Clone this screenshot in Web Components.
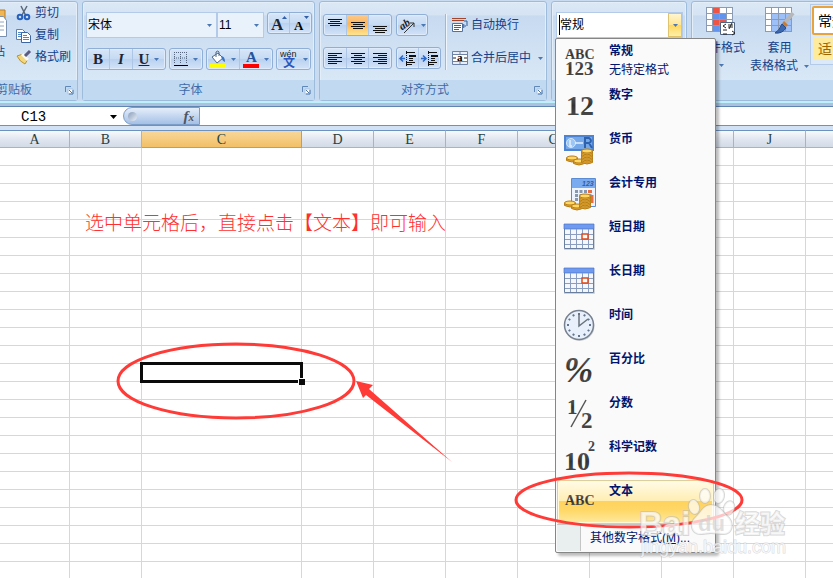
<!DOCTYPE html>
<html lang="zh-CN">
<head>
<meta charset="utf-8">
<title>数字格式</title>
<style>
html,body{margin:0;height:100%;overflow:hidden;background:#fff}
body{font:12px/18px "Liberation Sans","Noto Sans CJK SC",sans-serif;color:#15428b}
</style>
</head>
<body>
<sheet-app></sheet-app>
<script>
function define(name, css, html, setup) {
  const t = document.createElement('template');
  t.innerHTML = `<style>*{box-sizing:border-box}button,input,select{font:inherit;color:inherit;border:0;padding:0;margin:0;background:none;border-radius:0;outline:0}svg{display:block;flex:none}${css}</style>${html}`;
  customElements.define(name, class extends HTMLElement {
    constructor() {
      super();
      this.attachShadow({mode: 'open'}).append(t.content.cloneNode(true));
    }
    connectedCallback() { if (setup && !this.ready) { this.ready = true; setup(this, this.shadowRoot); } }
  });
}
const arrow = '<svg class="arrow" width="5" height="3"><path d="M0 0h5L2.500 3z" fill="#4a78b5"/></svg>';

define('ribbon-group', `
:host{display:flex;flex-direction:column;flex:none;height:100px;margin-top:1px;border:1px solid #9dbcdc;border-radius:3px;box-shadow:inset 0 0 0 1px #e4eef9;background:linear-gradient(#dce8f5 0,#d5e3f3 13px,#c7daf0 14px,#d9e8f6 80px)}
.body{flex:1;min-height:0}
footer{display:flex;align-items:center;height:20px;background:#c1d9f1;color:#3e6aaa}
.title{flex:1;text-align:center}
.launch{width:16px;height:16px;padding-left:4px}
`, `<div class="body"><slot></slot></div>
<footer><span class="title"></span><button class="launch" aria-label="更多选项"><svg width="9" height="9" fill="none"><path d="M.5 6V.5H6" stroke="#5f87b8"/><path d="M3 3h5v5H3z" fill="#fff" stroke="#a7c2e0"/><path d="M4 4l3 3M8 4v4H4" stroke="#4f78aa"/></svg></button></footer>`,
(h, r) => { r.querySelector('.title').textContent = h.getAttribute('label');
  if (h.hasAttribute('plain')) r.querySelector('.launch').remove(); });

define('button-strip', `
:host{display:inline-flex;flex:none;height:22px;border:1px solid #8fafd6;border-radius:3px;background:linear-gradient(#d8e6f7,#c5daf4 50%,#b9d1f0 51%,#d3e3f7);box-shadow:inset 0 0 0 1px #dfeafa}
`, `<slot></slot>`);

define('tool-button', `
:host{display:flex;flex:1;border-left:1px solid #adc6e6}
:host(:first-child){border-left:0}
:host([on]){background:linear-gradient(#fbc98d,#fdb559 45%,#ffe48e)}
button{display:flex;flex:1;align-items:center;justify-content:center;gap:5px;min-width:0}
.arrow{display:none}
:host([menu]) .arrow{display:block}
`, `<button><slot></slot>${arrow}</button>`, (h, r) => r.querySelector('button').setAttribute('aria-label', h.getAttribute('label')));

define('text-tool', `
:host{display:block;height:22px}
button{display:flex;align-items:center;gap:3px;height:22px;white-space:nowrap}
.arrow{display:none}
:host([menu]) .arrow{display:block;margin-left:4px}
`, `<button><slot name="icon"></slot><span><slot></slot></span>${arrow}</button>`);

define('combo-select', `
:host{display:grid;height:26px;background:#e9f1fb;border:1px solid #b3cbe8}
select{grid-area:1/1;appearance:none;width:100%;padding:0 1px;color:#000}
.arrow{grid-area:1/1;place-self:center end;margin-right:4px;pointer-events:none}
`, `<select><option></option></select>${arrow}`, (h, r) => {
  r.querySelector('option').textContent = h.getAttribute('value');
  r.querySelector('select').setAttribute('aria-label', h.getAttribute('label'));
});

define('format-item', `
:host{display:block;height:44px}
button{display:flex;width:100%;height:44px;text-align:left;color:#00156e}
.icon{flex:none;width:52px;height:44px;padding:1px 0 0 5px}
.text{line-height:19px;padding-top:2px}
b,span{display:block}
:host([selected]) button{background:linear-gradient(#fffbe6,#ffeeb4 47%,#ffd25c 48%,#ffd868 70%,#ffeaa0);border:1px solid #ddcf9b;border-radius:2px;box-shadow:inset 0 0 0 1px #fff8d9}
:host([selected]) .icon{width:51px;padding:0 0 0 4px}
:host([selected]) .text{padding-top:1px}
`, `<button role="option"><div class="icon"><slot></slot></div><div class="text"><b></b><span></span></div></button>`,
(h, r) => { r.querySelector('b').textContent = h.getAttribute('label'); r.querySelector('span').textContent = h.getAttribute('note') || ''; });

const ink = 'fill="url(#ink)"';
const defs = '<defs><linearGradient id="ink" x2="0" y2="1"><stop stop-color="#666"/><stop offset=".5" stop-color="#333"/><stop offset="1" stop-color="#555"/></linearGradient></defs>';
const serif = 'font-family="Liberation Serif" font-weight="700"';
const coin = (x, y) => `<ellipse cx="${x}" cy="${y}" rx="5.500" ry="2" fill="#ffd765" stroke="#b57b16"/>`;
const stack = (x, y, n) => Array.from({length: n}, (_, i) => `<path d="M${x - 5.5} ${y - i * 3}v2.500q5.500 3 11 0v-2.500z" fill="#e9aa32" stroke="#b57b16"/>` + coin(x, y - i * 3)).join('');
const svg = body => `<svg width="36" height="40">${defs}${body}</svg>`;
const calendar = svg(`<path d="M2.500 8.500h29v23h-29z" fill="#f4f8fe" stroke="#6a7f9e"/><path d="M2 7h30v5H2z" fill="#6f9af0" stroke="#4c72c8" stroke-width=".7"/><path d="M8.500 12v19M14.500 12v19M20.500 12v19M26.500 12v19M3 17.500h28M3 22.500h28M3 27.500h28" stroke="#8b9ec0"/><path d="M20 17h6v5h-6z" fill="#fff" stroke="#e04a18" stroke-width="1.500"/><path d="M2 32.500h30.500V12" fill="none" stroke="#cfd3da"/>`);
const ticks = Array.from({length: 12}, (_, i) => `<path d="M17 8v2" transform="rotate(${i * 30} 17 20)" stroke="#65758d" stroke-width="2"/>`).join('');

define('format-combo', `
:host{display:block;position:relative}
.field{display:flex;height:26px;border:1px solid #b3cbe8;background:#fff}
.caret{width:1px;height:20px;margin:2px 0 0 2px;background:#000}
input{flex:1;min-width:0;color:#000}
.drop{display:grid;place-items:center;width:14px;border:1px solid #e0c36f;background:linear-gradient(#fff6d0,#ffe696 49%,#ffd75c 50%,#fff0a8)}
.menu{position:absolute;z-index:2;top:26px;left:-1px;width:161px;padding:1px;border:1px solid #868686;border-radius:2px;background:#fafafa;box-shadow:3px 3px 3px #0004}
.more{display:flex;width:100%;height:27px;border-top:1px solid #c5c5c5;color:#00156e;text-align:left;line-height:27px;white-space:nowrap}
.more i{width:24px;margin-right:9px;background:#e9eeee;border-right:1px solid #c5c5c5}
`, `<div class="field"><span class="caret"></span><input value="常规" aria-label="数字格式"><button class="drop" aria-label="展开">${arrow}</button></div>
<div class="menu" role="listbox">
<format-item label="常规" note="无特定格式">${svg(`<text ${ink} ${serif} font-size="14" x="3" y="18">ABC</text><text ${ink} ${serif} font-size="19" x="3" y="34">123</text>`)}</format-item>
<format-item label="数字">${svg(`<text ${ink} ${serif} font-size="28" x="4" y="30">12</text>`)}</format-item>
<format-item label="货币">${svg(`<path d="M2 6h30v16H2z" fill="#4d83d0"/><path d="M4 8h26v12H4z" fill="#75a8e8"/><circle cx="9" cy="14" r="4.500" fill="#9cc6f5" stroke="#d5e7fb"/><path d="M8 11v6h2M13 14h8" stroke="#e3f0ff" fill="none" stroke-width="1.500"/><path d="M23 19V9h4q4 3 0 5l3 5M23 14h5" fill="none" stroke="#2e62ad" stroke-width="2"/>${stack(10, 29, 1)}${stack(17, 32, 1)}${stack(25, 31, 4)}`)}</format-item>
<format-item label="会计专用">${svg(`<path d="M9.500 5.500h24v28h-24z" fill="#edf4fe" stroke="#5b8bd3"/><path d="M10 6h23v9H10z" fill="#7aaaf0"/><text x="20" y="13" font-family="Liberation Sans" font-size="7" font-style="italic" font-weight="700" fill="#2f5eac">123</text><path d="M13 18.500h17M13 22.500h17M13 26.500h17" stroke="#8997ac" stroke-width="3" stroke-dasharray="3 1.500"/><path d="M26 18.500h4M30 22v8" stroke="#ea6c40" stroke-width="3"/>${stack(8, 30, 1)}${stack(15, 33, 1)}${stack(23, 32, 4)}`)}</format-item>
<format-item label="短日期">${calendar}</format-item>
<format-item label="长日期">${calendar}</format-item>
<format-item label="时间">${svg(`<circle cx="17.500" cy="21" r="15" fill="#cdd0d5"/><circle cx="17" cy="20" r="14.500" fill="#e8f1fb" stroke="#77818f" stroke-width="1.500"/>${ticks}<path d="M17 8v13l9-7" fill="none" stroke="#69737f" stroke-width="1.500"/>`)}</format-item>
<format-item label="百分比">${svg(`<text ${ink} ${serif} font-style="italic" font-size="35" x="2" y="33">%</text>`)}</format-item>
<format-item label="分数">${svg(`<text ${ink} ${serif} font-size="21" x="5" y="21">1</text><path d="M9 34L24 7" stroke="#555" stroke-width="1.500"/><text ${ink} ${serif} font-size="23" x="19" y="35">2</text>`)}</format-item>
<format-item label="科学记数">${svg(`<text ${ink} ${serif} font-size="26" x="2" y="33">10</text><text ${ink} ${serif} font-size="14" x="26" y="14">2</text>`)}</format-item>
<format-item label="文本" selected>${svg(`<text ${ink} ${serif} font-size="14" x="3" y="24">ABC</text>`)}</format-item>
<button class="more"><i></i><span>其他数字格式(<u>M</u>)...</span></button>
</div>`);

const lines = d => `<svg width="14" height="17" stroke="#111" stroke-width="1"><path d="${d}"/></svg>`;
const top3 = 'M0 2.500h14M2 4.500h10M0 6.500h14M2 8.500h10', mid3 = 'M0 5.500h14M2 7.500h10M0 9.500h14M2 11.500h10', bot3 = 'M0 9.500h14M2 11.500h10M0 13.500h14M2 15.500h10';
const left = 'M0 3.500h14M0 5.500h9M0 7.500h14M0 9.500h9M0 11.500h14M0 13.500h9', center = 'M0 3.500h14M3 5.500h8M0 7.500h14M3 9.500h8M0 11.500h14M3 13.500h8', right = 'M0 3.500h14M5 5.500h9M0 7.500h14M5 9.500h9M0 11.500h14M5 13.500h9';
const indent = d => `<svg width="17" height="15" fill="none" stroke="#111"><path d="M7 1.500h9M10 4.500h7M10 5.500h7M10 7.500h4M10 9.500h4M7 11.500h9M7 13.500h6"/><path d="M7.500 0v15" stroke-dasharray="1 1"/><path d="${d}" stroke="#2b67c7" stroke-width="1.500"/></svg>`;
const cells = extra => `<svg width="32" height="30"><path d="M1 1h27v25H1z" fill="#fff"/>${extra}<path d="M1.500 1v25M7.500 1v25M14.500 1v25M21.500 1v25M27.500 1v25M1 1.500h27M1 7.500h27M1 13.500h27M1 19.500h27M1 25.500h27" stroke="#8b9bb5"/>`;

define('ribbon-bar', `
:host{display:flex;gap:4px;height:107px;padding-bottom:6px;background:linear-gradient(#c8dbf0 0 101px,#bdf0fb 101px 103px,#aac2dd 103px 106px,#5f85b3 106px)}
.clip{width:112px;margin-left:-34px}
.font{width:233px}.align{width:228px}.num{width:136px}.styles{flex:1 0 240px}
.row{display:flex}
.clip .row{gap:8px;padding:0 0 0 11px}
.paste{width:30px;display:grid;justify-items:center;align-content:start;gap:6px;padding-top:5px}
.rows{padding:10px 3px 0;display:grid;gap:10px}
.gap{gap:4px}
.font .row{height:26px}
.font .row+.row{height:22px}
.font .gap{gap:3px}
.serif{font-family:"Liberation Serif";font-weight:700;color:#1d2634}
.align .cols{display:flex;padding:12px 3px 0}
.stack{display:grid;gap:11px;align-content:start;justify-items:start}
.sep{border-left:1px solid #9db9da;margin:0 6px 0 4px;height:56px;box-shadow:1px 0 #eef5fc}
.num format-combo{margin:10px 3px 0 4px}
.big{flex:none;display:grid;justify-items:center;align-content:start;width:58px;white-space:nowrap;line-height:18px;padding-top:4px}
.big>svg:first-child{margin-bottom:3px}
.big span{display:flex;align-items:center;gap:6px}
.gallery{flex:none;width:118px;margin:2px 0 0 2px;padding:1px;height:61px;display:grid;gap:2px;align-content:start;border:1px solid #b3cbe8;background:#dce9f8;font-size:14px}
.gallery button{height:29px;text-align:left;padding-left:5px;white-space:nowrap}
.gallery .n{border:2px solid #e8a33d;border-radius:2px;background:#fff;color:#000;padding-left:4px}
.gallery .m{background:#ffeb9c;color:#9c6500;height:23px;margin-left:2px;padding-left:4px}
`, `
<ribbon-group class="clip" label="剪贴板"><div class="row">
 <button class="paste"><svg width="30" height="30"><path d="M1 3h26v24H1z" fill="#f0b653" stroke="#ba7d2b"/><path d="M11.500 9.500h14l3 4v16h-17z" fill="#fff" stroke="#7890ad"/><path d="M14 15h12M14 19h12M14 23h12" stroke="#8da6c5"/></svg><span>粘贴</span></button>
 <div>
 <text-tool><svg slot="icon" width="16" height="16" fill="none"><path d="M5 1l5 10M11 1L6 10" stroke="#59687b" stroke-width="1.500"/><circle cx="4" cy="12" r="2.300" stroke="#2761bd" stroke-width="2"/><circle cx="11" cy="12" r="2.300" stroke="#2761bd" stroke-width="2"/></svg>剪切</text-tool>
 <text-tool><svg slot="icon" width="16" height="16"><path d="M.500 2.500h6l3 3v7h-9z" fill="#fff" stroke="#5f7fa9"/><path d="M2 5.500h4M2 7.500h5M2 9.500h5" stroke="#4e87cb"/><path d="M5.500 5.500h6l3 3v7h-9z" fill="#fff" stroke="#3c66a3"/><path d="M7 8.500h4M7 10.500h6M7 12.500h6" stroke="#4e87cb"/></svg>复制</text-tool>
 <text-tool><svg slot="icon" width="16" height="16"><path d="M1 7l6-2 5 5-3 5q-5-2-8-8z" fill="#f4d77b" stroke="#b79239"/><path d="M6 5l6 6" stroke="#f9f9ef" stroke-width="3"/><path d="M9 7l5-5" stroke="#5c5b82" stroke-width="3"/></svg>格式刷</text-tool>
 </div></div></ribbon-group>

<ribbon-group class="font" label="字体"><div class="rows">
 <div class="row"><combo-select value="宋体" label="字体" style="width:131px"></combo-select><combo-select value="11" label="字号" style="width:47px;margin-right:3px"></combo-select>
 <button-strip style="width:45px"><tool-button label="增大字号"><svg width="18" height="19"><text x="1" y="16" class="serif" font-size="17" fill="#1d2634">A</text><path d="M12 5h5l-2.500-3z" fill="#2e5fa8"/></svg></tool-button><tool-button label="减小字号"><svg width="18" height="19"><text x="2" y="16" class="serif" font-size="13">A</text><path d="M12 2h5l-2.500 3z" fill="#2e5fa8"/></svg></tool-button></button-strip></div>
 <div class="row gap">
 <button-strip style="width:80px"><tool-button label="加粗" class="serif" style="font-size:15px">B</tool-button><tool-button label="倾斜" class="serif" style="font-size:15px"><i>I</i></tool-button><tool-button label="下划线" menu class="serif" style="font-size:15px;flex:none;width:33px"><u>U</u></tool-button></button-strip>
 <button-strip style="width:34px"><tool-button label="边框" menu><svg width="14" height="16"><path d="M.500 1v11M6.500 1v11M12.500 1v11M0 1.500h13M0 7h13" fill="none" stroke="#55667e" stroke-dasharray="1 1"/><path d="M0 14.500h14" stroke="#000"/></svg></tool-button></button-strip>
 <button-strip style="width:67px"><tool-button label="填充颜色" menu><svg width="16" height="18"><path d="M2 7l6-4 5 5-6 5z" fill="#fff" stroke="#506986"/><path d="M6 7V2q2-2 3 0v4" fill="none" stroke="#506986"/><path d="M11 6q4 0 4 6-3-1-4-6z" fill="#3b72bd"/><path d="M0 14h16v4H0z" fill="#ff0"/></svg></tool-button><tool-button label="字体颜色" menu><svg width="16" height="18"><text x="3" y="12" class="serif" font-size="15" style="fill:#2a529a">A</text><path d="M0 14h16v4H0z" fill="red"/></svg></tool-button></button-strip>
 <button-strip style="width:35px"><tool-button label="拼音指南" menu><svg width="18" height="20"><text x="0" y="8" font-family="Liberation Sans" font-size="9" fill="#222">wén</text><text x="3" y="18" font-size="12" font-weight="700" fill="#2a56bd">文</text></svg></tool-button></button-strip>
 </div></div></ribbon-group>

<ribbon-group class="align" label="对齐方式"><div class="cols">
 <div class="stack">
 <div class="row gap"><button-strip style="width:69px"><tool-button label="顶端对齐">${lines(top3)}</tool-button><tool-button label="垂直居中" on>${lines(mid3)}</tool-button><tool-button label="底端对齐">${lines(bot3)}</tool-button></button-strip>
 <button-strip style="width:32px"><tool-button label="方向" menu><svg width="17" height="18"><text x="1" y="12" font-family="Liberation Serif" font-style="italic" font-weight="700" font-size="11" transform="rotate(-35 6 10)" fill="#222">ab</text><path d="M5 17L15 7m0 4V7h-4" fill="none" stroke="#333"/></svg></tool-button></button-strip></div>
 <div class="row gap"><button-strip style="width:69px"><tool-button label="左对齐">${lines(left)}</tool-button><tool-button label="居中">${lines(center)}</tool-button><tool-button label="右对齐">${lines(right)}</tool-button></button-strip>
 <button-strip style="width:45px"><tool-button label="减少缩进">${indent('M6 7.500H1m3-3l-3 3 3 3')}</tool-button><tool-button label="增加缩进">${indent('M0 7.500h5m-3-3l3 3-3 3')}</tool-button></button-strip></div></div>
 <div class="sep"></div>
 <div class="stack"><text-tool><svg slot="icon" width="16" height="16" fill="none"><path d="M0 1.500h14M0 3.500h12" stroke="#a3452d"/><path d="M.500 6.500h10v8H.500z" fill="#fff" stroke="#53719c"/><path d="M2 8.500h7M2 10.500h7M2 12.500h5" stroke="#a3452d"/><path d="M12 4h3v5m-3 0h2m-2-2l-1 2 1 2" stroke="#2d5c9c"/></svg>自动换行</text-tool>
 <text-tool menu><svg slot="icon" width="16" height="16"><path d="M.500 1.500h15v13H.500z" fill="#e9eef7" stroke="#6c83a7"/><path d="M0 4.500h16M0 11.500h16M8 1v3M8 12v3" stroke="#6c83a7"/><path d="M1 5h14v6H1z" fill="#fff"/><text x="5" y="11" font-family="Liberation Serif" font-weight="700" font-size="11">a</text><path d="M1 8h3M12 8h3" stroke="#222"/></svg>合并后居中</text-tool></div>
 </div></ribbon-group>

<ribbon-group class="num" label="数字"><format-combo></format-combo></ribbon-group>

<ribbon-group class="styles" label="" plain><div class="row">
 <button class="big">${cells('<path d="M8 1h6v6H8zM8 14h13v6H8z" fill="#ed5443"/><path d="M8 8h13v6H8zM8 20h6v6H8z" fill="#6294ee"/>')}<path d="M15.500 16.500h14v12h-14z" fill="#fff" stroke="#516480"/><path d="M21 18l-3 2 3 2m-3 2h4m1-5h5m-5 2h5m-1-4l-3 6m-6 5h4m5-3l3 2-3 2" fill="none" stroke="#222"/></svg><span>条件格式</span>${arrow.replace('class="arrow"', 'style="margin-top:7px"')}</button>
 <button class="big">${cells('<path d="M8 8h19v17H8z" fill="#9dc0f8"/>')}<path d="M29 7L19 19" stroke="#b5b7bb" stroke-width="4"/><path d="M20 15l4 4-3 3-4-3z" fill="#c57c38"/><path d="M18 18l4 4q-4 6-11 5 4-2 7-9z" fill="#3b69b1" stroke="#264b87"/></svg><span>套用</span><span>表格格式 ${arrow}</span></button>
 <div class="gallery"><button class="n">常规</button><button class="m">适中</button></div>
</div></ribbon-group>`);

define('formula-bar', `
:host{display:flex;height:23px;background:#fff;border-bottom:4px solid #d2e2f4;box-shadow:inset 0 -1px #6d92bf;color:#000}
.name{width:105px;padding:0 0 0 21px;font:14px "Liberation Mono"}
.drop{width:16px}
.fx{display:flex;align-items:center;justify-content:space-between;width:77px;height:18px;margin-left:2px;padding:0 5px 0 4px;border:1px solid #7c9dc8;border-radius:10px 0 0 10px;background:linear-gradient(#e5eefa,#a4c0e6)}
.dot{width:9px;height:9px;border-radius:50%;background:linear-gradient(135deg,#8a9db8,#e9eff8)}
.f{font:italic 700 15px "Liberation Serif";color:#4b5666}
.f small{font-size:11px}
.entry{flex:1;min-width:0;padding:0 4px}
`, `<input class="name" value="C13" aria-label="名称框"><button class="drop" aria-label="名称列表"><svg style="margin:auto" width="7" height="4"><path d="M0 0h7L3.500 4z"/></svg></button><div class="fx"><span class="dot"></span><button class="f" aria-label="插入函数">f<small>x</small></button></div><input class="entry" aria-label="编辑栏">`);

define('cell-grid', `
:host{display:block;flex:1;min-height:0;overflow:hidden;background:#fff}
table{border-collapse:separate;border-spacing:0;table-layout:fixed;width:0}
th{height:18px;padding:0;border-right:1px solid #9eb6ce;border-bottom:1px solid #9eb6ce;border-top:1px solid #6d92bf;background:linear-gradient(#f8fafd,#dde4ee 60%,#d3dbe7);font:14px/15px "Liberation Serif";color:#27413e}
th.on{background:linear-gradient(#f8d79b,#f2c065);border-right-color:#e79238;border-bottom-color:#e79238}
td{height:18px;padding:0;border-right:1px solid #d0d7e5;border-bottom:1px solid #d0d7e5}
td.active{position:relative}
td.active::before{content:"";position:absolute;inset:-2px;border:3px solid #0b0b0b}
td.active::after{content:"";position:absolute;right:-4px;bottom:-4px;width:6px;height:6px;background:#0b0b0b;border:solid #fff;border-width:1px 0 0 1px}
`, `<table><colgroup></colgroup><thead><tr></tr></thead><tbody></tbody></table>`, (h, r) => {
  const names = [...'ABCDEFGHIJKLMNOPQRSTUVWXYZ'];
  const sizes = {A: 70, C: 160};
  r.querySelector('colgroup').innerHTML = names.map(n => `<col style="width:${sizes[n] || 72}px">`).join('');
  r.querySelector('thead tr').innerHTML = names.map(n => `<th scope="col"${n === 'C' ? ' class="on"' : ''}>${n}</th>`).join('');
  r.querySelector('tbody').innerHTML = Array.from({length: 60}, (_, i) => '<tr>' + names.map(n => i === 12 && n === 'C' ? '<td class="active"></td>' : '<td></td>').join('') + '</tr>').join('');
});

define('mark-layer', `
:host{position:absolute;inset:0;z-index:3;pointer-events:none;overflow:hidden}
svg{position:absolute;left:0;top:0}
p{position:absolute;left:85px;top:209px;margin:0;font:300 19px/26px "Noto Sans CJK SC",sans-serif;color:#ff3030;white-space:nowrap}
`, `<p>选中单元格后，直接点击【文本】即可输入</p>
<svg width="833" height="578" fill="none"><g stroke="#ff3b38" stroke-width="3"><ellipse cx="236" cy="381" rx="118" ry="37"/><ellipse cx="629" cy="500" rx="113" ry="27"/></g>
<path d="M356 381l17 4-4 4 83 73-86-67-3 3z" fill="#ff3b38"/>
<g fill="#fff" fill-opacity=".7" stroke="#b8b8b8" stroke-opacity=".55" stroke-width="2" paint-order="stroke" font-family="Liberation Sans,Noto Sans CJK SC,sans-serif">
<ellipse cx="694" cy="507" rx="5" ry="7" transform="rotate(-15 694 507)"/><ellipse cx="705" cy="496" rx="5" ry="7"/><ellipse cx="719" cy="496" rx="5" ry="7" transform="rotate(10 719 496)"/><ellipse cx="729" cy="508" rx="5" ry="7" transform="rotate(20 729 508)"/>
<path d="M711 505c-8 0-10 8-16 13-6 6-3 16 5 16 5 0 7-1 11-1s8 1 13 1c8 0 10-10 5-16-6-5-9-13-18-13z"/>
<text x="639" y="535" font-size="33" font-weight="700">Bai</text><text x="735" y="533" font-size="25" font-weight="700">经验</text>
<text x="698" y="531" font-size="22" font-weight="700" fill="#d2d2d2" stroke="none">du</text>
<text x="641" y="553" font-size="18" stroke-width="1">jingyan.baidu.com</text></g></svg>`);

define('sheet-app', `
:host{display:flex;flex-direction:column;position:relative;height:100vh;overflow:hidden}
ribbon-bar{position:relative;z-index:2}
`, `<ribbon-bar></ribbon-bar><formula-bar></formula-bar><cell-grid></cell-grid><mark-layer></mark-layer>`);
</script>
</body>
</html>
